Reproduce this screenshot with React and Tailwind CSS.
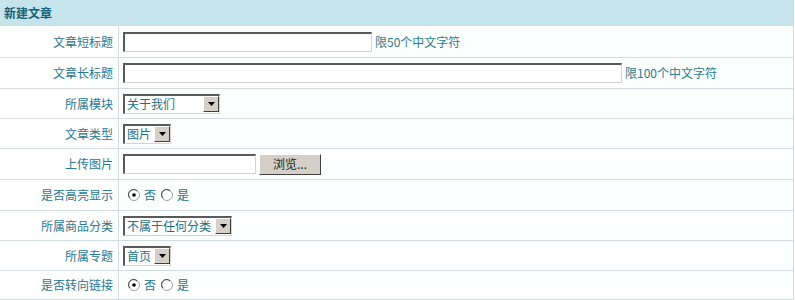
import React from "react";

const font = { fontFamily: '"Noto Sans CJK SC", "Noto Sans", sans-serif' };

function TextBox({ w }) {
  return (
    <div
      className={`h-[20px] bg-white border-t-2 border-l-2 border-b border-r border-t-[#5a5a5a] border-l-[#5a5a5a] border-b-[#d8d4cc] border-r-[#d8d4cc] ${w}`}
    />
  );
}

function Arrow() {
  return (
    <div className="w-[16px] h-[16px] bg-[#d4d0c8] border border-t-white border-l-white border-b-[#404040] border-r-[#404040] flex items-center justify-center">
      <svg width="7" height="4" viewBox="0 0 7 4">
        <path d="M0 0 H7 L3.5 4 Z" fill="#000" />
      </svg>
    </div>
  );
}

function Select({ w, text }) {
  return (
    <div
      className={`h-[20px] bg-white border-t-2 border-l-2 border-b border-r border-t-[#5a5a5a] border-l-[#5a5a5a] border-b-[#d8d4cc] border-r-[#d8d4cc] flex items-center justify-between ${w}`}
    >
      <span className="pl-[2px] text-[12px] leading-[16px] text-[#246f86] whitespace-nowrap">{text}</span>
      <Arrow />
    </div>
  );
}

function Radio({ checked }) {
  return (
    <svg width="12" height="12" viewBox="0 0 12 12" className="shrink-0">
      <circle cx="6" cy="6" r="5.5" fill="#fff" stroke="#a0a0a0" />
      <path d="M2 9 A4.5 4.5 0 0 1 9 2" fill="none" stroke="#404040" strokeWidth="1" />
      {checked && <circle cx="6" cy="6" r="1.8" fill="#000" />}
    </svg>
  );
}

function Radios() {
  return (
    <div className="flex items-center text-[12px] text-[#246f86] pl-[5px]">
      <Radio checked />
      <span className="ml-[4px]">否</span>
      <span className="ml-[5px]"><Radio /></span>
      <span className="ml-[4px]">是</span>
    </div>
  );
}

function Row({ label, children, h = "h-[30px]" }) {
  return (
    <div className={`flex ${h} border-b border-[#d3dce2]`}>
      <div className="w-[119px] shrink-0 border-r border-[#d3dce2] flex items-center justify-end pr-[5px] text-[12px] text-[#2a7690]">
        {label}
      </div>
      <div className="flex-1 flex items-center pl-[4px] bg-[#fdfefe]">{children}</div>
    </div>
  );
}

export default function App() {
  return (
    <div style={font} className="w-[795px] h-[300px] bg-white overflow-hidden">
      <div className="w-[794px] border-r border-[#d3dce2]">
        <div className="h-[26px] bg-[#c5e4eb] flex items-center pl-[4px] text-[12px] font-bold text-[#16627a]">
          新建文章
        </div>
        <Row label="文章短标题" h="h-[32px]">
          <TextBox w="w-[249px]" />
          <span className="ml-[3px] text-[12px] text-[#2a7c8e]">限50个中文字符</span>
        </Row>
        <Row label="文章长标题" h="h-[31px]">
          <TextBox w="w-[499px]" />
          <span className="ml-[3px] text-[12px] text-[#2a7c8e]">限100个中文字符</span>
        </Row>
        <Row label="所属模块">
          <Select w="w-[97px]" text="关于我们" />
        </Row>
        <Row label="文章类型">
          <Select w="w-[48px]" text="图片" />
        </Row>
        <Row label="上传图片" h="h-[31px]">
          <TextBox w="w-[133px]" />
          <div className="ml-[3px] w-[62px] h-[21px] bg-[#d4d0c8] border border-t-white border-l-white border-b-[#404040] border-r-[#404040] flex items-center justify-center text-[12px] text-[#222]">
            浏览...
          </div>
        </Row>
        <Row label="是否高亮显示" h="h-[31px]">
          <Radios />
        </Row>
        <Row label="所属商品分类">
          <Select w="w-[109px]" text="不属于任何分类" />
        </Row>
        <Row label="所属专题">
          <Select w="w-[48px]" text="首页" />
        </Row>
        <Row label="是否转向链接" h="h-[29px]">
          <Radios />
        </Row>
      </div>
    </div>
  );
}
